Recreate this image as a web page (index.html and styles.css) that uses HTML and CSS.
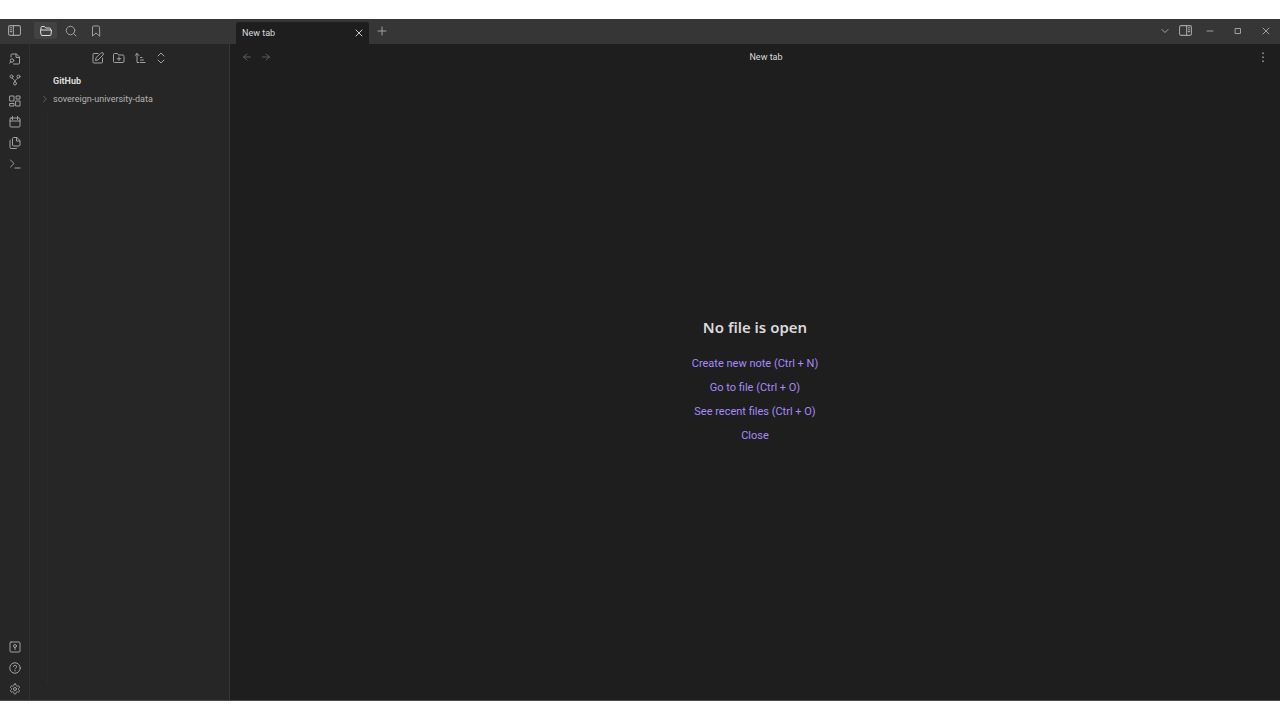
FILE: index.html
```html
<!DOCTYPE html>
<html lang="en">
<head>
<meta charset="utf-8">
<title>New tab - GitHub</title>
<link rel="stylesheet" href="styles.css">
</head>
<body>
<div class="app">
  <header class="titlebar">
    <div class="titlebar-left">
      <button class="icon-btn toggle" aria-label="Toggle left sidebar"><svg class="icon panel" viewBox="0 0 24 24"><rect x="1" y="3" width="22" height="18" rx="3"/><path d="M10 3v18M4 7h3M4 10.500h3M4 14h3"/></svg></button>
      <nav class="side-tabs">
        <button class="icon-btn side-tab active" aria-label="Files"><svg class="icon" viewBox="0 0 24 24"><path d="M21 10V8a2 2 0 0 0-2-2h-7.500L9 3H4a2 2 0 0 0-2 2v5M1 10h22l-1 9a2 2 0 0 1-2 2H4a2 2 0 0 1-2-2z"/></svg></button>
        <button class="icon-btn side-tab" aria-label="Search"><svg class="icon" viewBox="0 0 24 24"><circle cx="11" cy="11" r="8.500"/><path d="m22 22-5-5"/></svg></button>
        <button class="icon-btn side-tab" aria-label="Bookmarks"><svg class="icon" viewBox="0 0 24 24"><path d="m19 22-7-6-7 6V4a2 2 0 0 1 2-2h10a2 2 0 0 1 2 2z"/></svg></button>
      </nav>
    </div>
    <div class="tabs">
      <div class="tab">
        <span class="tab-title">New tab</span>
        <button class="icon-btn tab-close" aria-label="Close tab"><svg class="icon" viewBox="0 0 24 24"><path d="m6 6 12 12M18 6 6 18"/></svg></button>
      </div>
      <button class="icon-btn add" aria-label="New tab"><svg class="icon" viewBox="0 0 24 24"><path d="M4 12h16M12 4v16"/></svg></button>
    </div>
    <div class="window-tools">
      <button class="icon-btn" aria-label="Tab list"><svg class="icon" viewBox="0 0 24 24"><path d="m6 9 6 6 6-6"/></svg></button>
      <button class="icon-btn" aria-label="Toggle right sidebar"><svg class="icon panel" viewBox="0 0 24 24"><rect x="1" y="3" width="22" height="18" rx="3"/><path d="M14 3v18M17 7h3M17 10.500h3M17 14h3"/></svg></button>
    </div>
    <div class="window-controls">
      <button class="icon-btn control" aria-label="Minimize"><svg class="icon small" viewBox="0 0 10 10"><path d="M2 5h6"/></svg></button>
      <button class="icon-btn control" aria-label="Maximize"><svg class="icon small" viewBox="0 0 10 10"><path d="M2.500 2.500h5v5h-5z"/></svg></button>
      <button class="icon-btn control" aria-label="Close window"><svg class="icon small" viewBox="0 0 10 10"><path d="m2 2 6 6M8 2 2 8"/></svg></button>
    </div>
  </header>

  <div class="workspace">
    <aside class="ribbon">
      <div class="ribbon-group">
        <button class="icon-btn" aria-label="Open quick switcher"><svg class="icon" viewBox="0 0 24 24"><path d="M4 8V4a2 2 0 0 1 2-2h9l6 6v12a2 2 0 0 1-2 2H9M14 2v7h7"/><circle cx="6" cy="15" r="3.500"/><path d="m3.500 17.500-2 3"/></svg></button>
        <button class="icon-btn" aria-label="Open graph view"><svg class="icon" viewBox="0 0 24 24"><circle cx="12" cy="19" r="3"/><circle cx="5" cy="5" r="3"/><circle cx="19" cy="5" r="3"/><path d="M6 8c1 3 6 2 6 8 0-6 5-5 6-8"/></svg></button>
        <button class="icon-btn" aria-label="Create new canvas"><svg class="icon" viewBox="0 0 24 24"><path d="M2 2h8v10H2zM15 2h7v6h-7zM14 12h8v10h-8zM2 17h8v5H2z"/></svg></button>
        <button class="icon-btn" aria-label="Open today's daily note"><svg class="icon" viewBox="0 0 24 24"><rect x="2" y="4" width="20" height="18" rx="2"/><path d="M7 1v6M17 1v6M2 10h20"/></svg></button>
        <button class="icon-btn" aria-label="Insert template"><svg class="icon" viewBox="0 0 24 24"><path d="M15 1H9a2 2 0 0 0-2 2v13a2 2 0 0 0 2 2h11a2 2 0 0 0 2-2V8zM15 1v7h7M3 6a2 2 0 0 0-1 2v13a2 2 0 0 0 2 2h10a2 2 0 0 0 2-1"/></svg></button>
        <button class="icon-btn" aria-label="Open command palette"><svg class="icon" viewBox="0 0 24 24"><path d="m3 18 7-7-7-7M12 20h10"/></svg></button>
      </div>
      <div class="ribbon-group">
        <button class="icon-btn" aria-label="Open another vault"><svg class="icon" viewBox="0 0 24 24"><rect x="2" y="2" width="20" height="20" rx="2"/><circle cx="12" cy="10" r="3"/><path d="M12 13v4"/></svg></button>
        <button class="icon-btn" aria-label="Help"><svg class="icon" viewBox="0 0 24 24"><circle cx="12" cy="12" r="10.500"/><path d="M9 9a3 3 0 0 1 6 1c0 2-3 2.500-3 4M12 17v1"/></svg></button>
        <button class="icon-btn" aria-label="Settings"><svg class="icon" viewBox="0 0 24 24"><path d="M12.220 2h-.44a2 2 0 0 0-2 2v.18a2 2 0 0 1-1 1.730l-.43.25a2 2 0 0 1-2 0l-.15-.08a2 2 0 0 0-2.730.73l-.22.38a2 2 0 0 0 .73 2.730l.15.1a2 2 0 0 1 1 1.720v.51a2 2 0 0 1-1 1.740l-.15.09a2 2 0 0 0-.73 2.730l.22.38a2 2 0 0 0 2.730.73l.15-.08a2 2 0 0 1 2 0l.43.25a2 2 0 0 1 1 1.730V20a2 2 0 0 0 2 2h.44a2 2 0 0 0 2-2v-.18a2 2 0 0 1 1-1.730l.43-.25a2 2 0 0 1 2 0l.15.08a2 2 0 0 0 2.730-.73l.22-.39a2 2 0 0 0-.73-2.730l-.15-.08a2 2 0 0 1-1-1.740v-.5a2 2 0 0 1 1-1.740l.15-.09a2 2 0 0 0 .73-2.730l-.22-.38a2 2 0 0 0-2.730-.73l-.15.08a2 2 0 0 1-2 0l-.43-.25a2 2 0 0 1-1-1.730V4a2 2 0 0 0-2-2z"/><circle cx="12" cy="12" r="3"/></svg></button>
      </div>
    </aside>

    <section class="explorer">
      <div class="explorer-actions">
        <button class="icon-btn" aria-label="New note"><svg class="icon" viewBox="0 0 24 24"><path d="M12 3H4a2 2 0 0 0-2 2v15a2 2 0 0 0 2 2h15a2 2 0 0 0 2-2v-8M18 2a2.500 2.500 0 0 1 4 4L12 16l-5 1 1-5z"/></svg></button>
        <button class="icon-btn" aria-label="New folder"><svg class="icon" viewBox="0 0 24 24"><path d="M22 19a2 2 0 0 1-2 2H3a2 2 0 0 1-2-2V5a2 2 0 0 1 2-2h6l2 3h9a2 2 0 0 1 2 2zM12 10v7M8.500 13.500h7"/></svg></button>
        <button class="icon-btn" aria-label="Change sort order"><svg class="icon" viewBox="0 0 24 24"><path d="m2 7 4-4 4 4M6 3v18h4M13 11h3M13 16h6M13 21h9"/></svg></button>
        <button class="icon-btn" aria-label="Expand all"><svg class="icon" viewBox="0 0 24 24"><path d="m6 8 6-6 6 6M6 16l6 6 6-6"/></svg></button>
      </div>
      <h2 class="vault">GitHub</h2>
      <button class="folder"><svg class="icon chevron" viewBox="0 0 24 24"><path d="m8 4 8 8-8 8"/></svg><span>sovereign-university-data</span></button>
      <div class="guide"></div>
    </section>

    <main class="pane">
      <div class="view-header">
        <div class="history">
          <button class="icon-btn" aria-label="Back"><svg class="icon" viewBox="0 0 24 24"><path d="M19 12H5M12 6l-7 6 7 6"/></svg></button>
          <button class="icon-btn" aria-label="Forward"><svg class="icon" viewBox="0 0 24 24"><path d="M5 12h14M12 6l7 6-7 6"/></svg></button>
        </div>
        <span class="view-title">New tab</span>
        <button class="icon-btn more" aria-label="More options"><svg class="icon" viewBox="0 0 24 24"><path d="M12 4v1M12 12v1M12 20v1"/></svg></button>
      </div>
      <div class="empty">
        <h1 class="empty-title">No file is open</h1>
        <button class="action">Create new note (Ctrl + N)</button>
        <button class="action">Go to file (Ctrl + O)</button>
        <button class="action">See recent files (Ctrl + O)</button>
        <button class="action">Close</button>
      </div>
    </main>
  </div>
</div>
</body>
</html>
```
FILE: styles.css
```css
* { box-sizing: border-box; }
body {
  margin: 0;
  height: 100vh;
  padding: 19px 0;
  background: #fff;
  color: #dadada;
  font-family: Roboto, "Noto Sans", sans-serif;
  font-size: 9px;
}
button { margin: 0; padding: 0; border: 0; background: none; color: inherit; font: inherit; }
h1, h2 { margin: 0; }
.app { height: 100%; display: flex; flex-direction: column; background: #1e1e1e; border-bottom: 1px solid #4a4a4a; }
.icon { display: block; width: 12px; height: 12px; fill: none; stroke: currentColor; stroke-width: 2; stroke-linecap: round; stroke-linejoin: round; }
.icon.panel { width: 13px; height: 13px; }
.icon.small { width: 10px; height: 10px; stroke-width: 1; }
.icon-btn { display: flex; flex: none; align-items: center; justify-content: center; width: 21px; height: 21px; color: #a0a0a0; }

.titlebar { display: flex; flex: none; height: 25px; background: #363636; }
.titlebar-left { display: flex; flex: none; width: 236px; }
.titlebar-left .toggle { width: 29px; height: 23px; }
.side-tabs { display: flex; gap: 2px; padding: 3px 0 0 5px; }
.side-tab { width: 23px; height: 17px; border-radius: 2px; }
.side-tab.active { background: #424242; color: #dadada; }
.tabs { display: flex; flex: 1; padding-top: 3px; }
.tab { display: flex; align-items: center; justify-content: space-between; width: 133px; height: 22px; padding: 0 0 1px 6px; border-radius: 3px 3px 0 0; background: #1e1e1e; }
.tab-close { color: #c8c8c8; }
.add { width: 26px; height: 18px; }
.window-tools { display: flex; padding-top: 1px; }
.window-controls { display: flex; padding-top: 1px; }
.control { width: 28px; }

.workspace { display: flex; flex: 1; min-height: 0; }
.ribbon { display: flex; flex: none; flex-direction: column; justify-content: space-between; width: 30px; padding: 4px 0 1px; border-right: 1px solid #303030; background: #262626; }
.ribbon-group .icon-btn { width: 29px; }
.explorer { display: flex; flex: none; flex-direction: column; width: 200px; border-right: 1px solid #363636; background: #262626; }
.explorer-actions { display: flex; justify-content: center; height: 28px; padding-top: 3px; }
.vault { padding-left: 23px; font-size: 9px; font-weight: 700; line-height: 18px; }
.folder { display: flex; align-items: center; gap: 4px; padding-left: 11px; color: #b3b3b3; line-height: 18px; }
.chevron { width: 8px; height: 8px; color: #7a7a7a; }
.guide { flex: 1; margin: 4px 0 16px 17px; border-left: 1px solid #2a2a2a; }

.pane { display: flex; flex: 1; flex-direction: column; min-width: 0; }
.view-header { display: flex; align-items: center; height: 25px; padding: 0 7px; }
.history { display: flex; padding-right: 5px; }
.history .icon-btn { width: 19px; color: #5a5a5a; }
.view-title { flex: 1; text-align: center; }
.more .icon { stroke-width: 3; }
.empty { display: flex; flex: 1; flex-direction: column; align-items: center; justify-content: center; padding-bottom: 7px; }
.empty-title { margin-bottom: 13px; font-family: "Noto Sans", "Open Sans", sans-serif; font-size: 15px; font-weight: 600; line-height: 24px; }
.action { color: #a68af9; font-size: 11px; line-height: 24px; }
```
